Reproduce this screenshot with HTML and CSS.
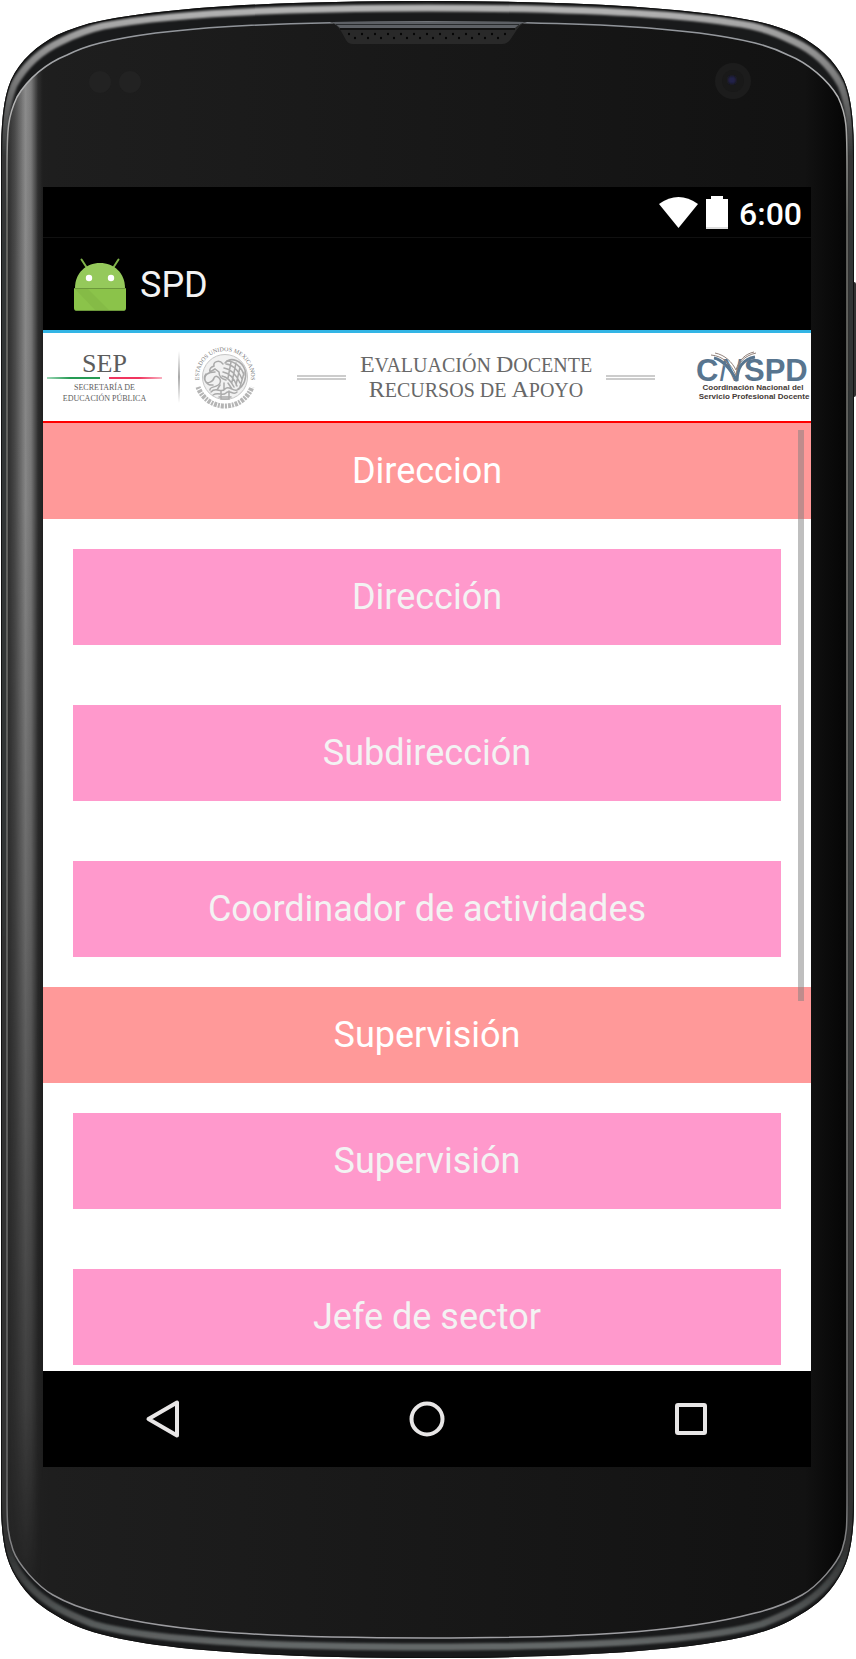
FILE: index.html
```html
<!DOCTYPE html>
<html lang="es">
<head>
<meta charset="utf-8">
<meta name="viewport" content="width=device-width, initial-scale=1">
<title>SPD</title>
<link rel="stylesheet" href="styles.css">
</head>
<body>
<div class="device">
  <svg class="frame" viewBox="0 0 856 1659" preserveAspectRatio="none" aria-hidden="true">
    <defs>
      <linearGradient id="face" x1="0" x2="1" y1="0" y2="0">
        <stop offset="0" stop-color="#242424"/><stop offset=".06" stop-color="#1e1e1e"/>
        <stop offset=".5" stop-color="#181818"/><stop offset=".94" stop-color="#121212"/><stop offset="1" stop-color="#020202"/>
      </linearGradient>
      <linearGradient id="rim" x1="0" x2="0" y1="0" y2="1">
        <stop offset="0" stop-color="#b4b4b4"/><stop offset=".04" stop-color="#808080"/><stop offset=".09" stop-color="#343636"/>
        <stop offset=".94" stop-color="#303232"/><stop offset="1" stop-color="#646868"/>
      </linearGradient>
      <linearGradient id="edge" x1="0" x2="0" y1="0" y2="1">
        <stop offset="0" stop-color="#8e9298"/><stop offset=".05" stop-color="#b8b8b8"/><stop offset=".12" stop-color="#757570"/>
        <stop offset=".9" stop-color="#6c6c6c"/><stop offset="1" stop-color="#a0a0a4"/>
      </linearGradient>
      <linearGradient id="gloss" x1="8" x2="43" y1="0" y2="0" gradientUnits="userSpaceOnUse">
        <stop offset="0" stop-color="#999999" stop-opacity=".1"/><stop offset=".2" stop-color="#999999" stop-opacity=".35"/>
        <stop offset=".5" stop-color="#999999" stop-opacity=".9"/><stop offset=".66" stop-color="#999999" stop-opacity=".75"/>
        <stop offset=".86" stop-color="#999999" stop-opacity=".12"/><stop offset="1" stop-color="#999999" stop-opacity="0"/>
      </linearGradient>
      <linearGradient id="fade" x1="0" x2="0" y1="0" y2="1">
        <stop offset="0" stop-color="#ffffff"/><stop offset=".3" stop-color="#eeeeee"/><stop offset=".55" stop-color="#aaaaaa"/>
        <stop offset=".85" stop-color="#444444"/><stop offset=".96" stop-color="#000000"/>
      </linearGradient>
      <mask id="glossmask"><rect width="60" height="1659" fill="url(#fade)"/></mask>
      <pattern id="holes" width="13" height="10" patternUnits="userSpaceOnUse" x="346" y="31">
        <circle cx="3" cy="3" r="1.2" fill="#050505"/><circle cx="9" cy="7" r="1.2" fill="#050505"/>
      </pattern>
      <clipPath id="shell"><path d="M1 160C1 125 3 98 11 80C20 60 38 45 57 35C70 29 85 24 100 21C170 7 280 1 428 1C575 1 685 7 755 21C770 24 785 29 798 35C817 45 835 60 844 80C852 98 854 125 854 160V1500C854 1525 852 1543 848 1557C843 1575 829 1595 812 1607C798 1617 783 1625 768 1630C708 1651 570 1658 428 1658C285 1658 147 1651 87 1630C72 1625 57 1617 43 1607C26 1595 12 1575 7 1557C3 1543 1 1525 1 1500Z"/></clipPath>
      <clipPath id="glass"><path d="M7 170C7 128 8 116 17 97C28 78 47 63 67 55C77 50 88 46 100 43C165 27 270 22 428 22C585 22 690 27 755 43C767 46 778 50 788 55C808 63 828 80 838 97C847 116 847 128 847 170V1500C847 1526 847 1535 842 1550C837 1564 818 1586 802 1595C788 1603 772 1609 755 1613C680 1633 575 1638 428 1638C280 1638 175 1633 100 1613C83 1609 67 1603 53 1595C37 1586 18 1564 13 1550C8 1535 7 1526 7 1500Z"/></clipPath>
      <filter id="soft"><feGaussianBlur stdDeviation="1.3"/></filter>
    </defs>
    <rect x="851" y="282" width="5" height="115" rx="2" fill="#333"/>
    <g clip-path="url(#shell)">
      <rect width="856" height="1659" fill="#191a1b"/>
      <path filter="url(#soft)" fill="none" stroke="url(#rim)" stroke-width="7" d="M4 165C4 125 6 105 14 85C25 65 40 51 62 41C76 34 90 29 103 26C172 13 280 8 428 8C575 8 683 13 752 26C765 29 779 34 793 41C815 51 830 65 841 85C849 105 851 125 851 165V1500C851 1525 850 1538 845 1554C840 1572 824 1590 808 1601C795 1611 777 1618 762 1624C700 1642 570 1647 428 1647C285 1647 155 1642 93 1624C78 1618 60 1611 47 1601C31 1590 15 1572 10 1554C5 1538 4 1525 4 1500Z"/>
      <path fill="none" stroke="#111" stroke-width="2" d="M1 160C1 125 3 98 11 80C20 60 38 45 57 35C70 29 85 24 100 21C170 7 280 1 428 1C575 1 685 7 755 21C770 24 785 29 798 35C817 45 835 60 844 80C852 98 854 125 854 160V1500C854 1525 852 1543 848 1557C843 1575 829 1595 812 1607C798 1617 783 1625 768 1630C708 1651 570 1658 428 1658C285 1658 147 1651 87 1630C72 1625 57 1617 43 1607C26 1595 12 1575 7 1557C3 1543 1 1525 1 1500Z"/>
    </g>
    <g clip-path="url(#glass)">
      <rect width="856" height="1659" fill="url(#face)"/>
      <rect width="60" height="1659" fill="url(#gloss)" mask="url(#glossmask)"/>
    </g>
    <path fill="none" stroke="url(#edge)" stroke-width="1.5" d="M7 170C7 128 8 116 17 97C28 78 47 63 67 55C77 50 88 46 100 43C165 27 270 22 428 22C585 22 690 27 755 43C767 46 778 50 788 55C808 63 828 80 838 97C847 116 847 128 847 170V1500C847 1526 847 1535 842 1550C837 1564 818 1586 802 1595C788 1603 772 1609 755 1613C680 1633 575 1638 428 1638C280 1638 175 1633 100 1613C83 1609 67 1603 53 1595C37 1586 18 1564 13 1550C8 1535 7 1526 7 1500Z"/>
    <path fill="#292929" d="M330 22Q335 23 341 31L346 40Q348 44 353 44H502Q507 44 510 40L516 31Q521 23 527 22Z"/>
    <path fill="#5d6065" d="M330 22Q335 23 340 28H515Q520 23 527 22Z"/>
    <path stroke="#0b0b0b" stroke-width="1.5" d="M340 29H515"/>
    <path stroke="#272a2c" d="M336 24.500H519"/>
    <path fill="url(#holes)" d="M346 31H511L506 41H350Z"/>
    <g fill="#222"><circle cx="100" cy="82" r="11"/><circle cx="130" cy="82" r="11"/></g>
    <circle cx="733" cy="81" r="18" fill="#1c1c1c"/><circle cx="733" cy="81" r="11" fill="#191919"/>
    <circle cx="732" cy="80" r="4" fill="#22204a" filter="url(#soft)"/>
  </svg>

  <main class="screen">
    <div class="status">
      <svg class="wifi" viewBox="0 0 39 31" aria-hidden="true"><path fill="#fff" d="M0 7Q19.500-7 39 7L19.500 31Z"/></svg>
      <svg class="battery" viewBox="0 0 22 33" aria-hidden="true"><path fill="#fff" d="M0 3H5V0H17V3H22V33H0Z"/><path fill="#ddd" d="M0 31H22V33H0Z"/></svg>
      <time class="clock">6:00</time>
    </div>
    <header class="appbar">
      <svg class="robot" viewBox="0 0 52 53" aria-hidden="true">
        <path stroke="#7fb348" stroke-width="2" stroke-linecap="round" d="M7.500 1.500L13 10M44.500 1.500L39 10"/>
        <path fill="#95c95b" d="M1 30C1 15 12 5 26 5S51 15 51 30Z"/>
        <path fill="#8bc34a" d="M0 30H52V50Q52 53 49 53H3Q0 53 0 50Z"/>
        <path fill="#7cae42" opacity=".4" d="M1 31L22 53H36L14 31Z"/>
        <path stroke="#6c983b" d="M0 30.500H52M2 52.500H50"/>
        <circle cx="15" cy="20" r="3.200" fill="#fff"/><circle cx="37" cy="20" r="3.200" fill="#fff"/>
      </svg>
      <h1 class="title">SPD</h1>
    </header>

    <section class="banner">
      <div class="brand">
        <div class="sep">
          <span class="sep-name">SEP</span>
          <span class="sep-rule"></span>
          <span class="sep-text">SECRETARÍA DE<br>EDUCACIÓN PÚBLICA</span>
        </div>
        <span class="divider"></span>
        <svg class="seal" viewBox="0 0 64 64" role="img" aria-label="Estados Unidos Mexicanos">
          <path id="arc" fill="none" d="M8 42A26 26 0 1 1 56 42"/>
          <text class="seal-text"><textPath href="#arc" startOffset="50%" text-anchor="middle">ESTADOS UNIDOS MEXICANOS</textPath></text>
          <path fill="none" stroke="#b5b5b5" stroke-width="5" stroke-dasharray="2 1 3 1" d="M5 42C9 53 19 61 32 61S55 53 59 42"/>
          <circle cx="32" cy="32" r="22.500" fill="#f1f1f1" stroke="#c6c6c6"/>
          <g fill="none" stroke="#aaa" stroke-width="1.500" stroke-linecap="round">
            <path d="M32 18C38 11 49 16 52 25C54 33 51 41 45 44M30 19C26 14 20 17 21 21C18 22 16 24 17 27L22 24L26 27C26 31 29 34 33 35"/>
            <path d="M33 19C38 19 45 24 49 34M31 23C37 24 43 29 47 38M30 27C36 28 41 33 44 41M34 16C41 16 48 21 51 30M29 31C34 32 38 36 41 42M38 17L35 33M43 18L39 37M47 22L43 40M51 28L47 42"/>
            <path d="M22 27C15 27 11 30 12 35S20 37 21 33S29 33 27 38S16 41 17 45M13 29C9 34 14 41 20 40"/>
            <path d="M27 40L24 45M31 38L31 45M35 38L39 44M18 47C23 41 28 49 32 44S41 49 46 44M20 50C26 46 29 52 33 48S40 51 44 47M26 52H38M28 46V54H36V46"/>
          </g>
        </svg>
      </div>
      <div class="headline">
        <span class="rails"></span>
        <h2 class="headline-text"><span class="cap">E</span>VALUACIÓN <span class="cap">D</span>OCENTE<br><span class="cap">R</span>ECURSOS DE <span class="cap">A</span>POYO</h2>
        <span class="rails"></span>
      </div>
      <svg class="cnspd" viewBox="0 0 116 60" role="img" aria-label="CNSPD">
        <g class="cnspd-name">
          <text x="1" y="34">C</text><text class="cnspd-n" x="24" y="34">N</text><text x="49" y="34">SPD</text>
        </g>
        <path fill="none" stroke="#fff" stroke-width="1.500" d="M20 12C30 16 37 25 41 33"/>
        <path fill="none" stroke="#58758f" stroke-width="3" d="M19 11C29 13 36 23 42 34C42 20 49 12 60 10"/>
        <path fill="none" stroke="#92827b" stroke-width="1" d="M16 8C28 9 36 17 41 28C43 15 49 9 61 6M20 6C30 8 37 15 41 23C44 13 50 7 59 5"/>
        <text class="cnspd-text" x="58" y="43" text-anchor="middle">Coordinación Nacional del</text>
        <text class="cnspd-text" x="59" y="52" text-anchor="middle">Servicio Profesional Docente</text>
      </svg>
    </section>

    <div class="list">
      <h2 class="group">Direccion</h2>
      <div class="options">
        <button class="option" type="button">Dirección</button>
        <button class="option" type="button">Subdirección</button>
        <button class="option" type="button">Coordinador de actividades</button>
      </div>
      <h2 class="group">Supervisión</h2>
      <div class="options options-last">
        <button class="option" type="button">Supervisión</button>
        <button class="option" type="button">Jefe de sector</button>
      </div>
      <span class="thumb"></span>
    </div>

    <nav class="navbar">
      <button class="key" type="button" aria-label="Atrás"><svg viewBox="0 0 40 40"><path d="M5.500 20L34 3.500V36.500Z"/></svg></button>
      <button class="key" type="button" aria-label="Inicio"><svg viewBox="0 0 40 40"><circle cx="20" cy="20" r="15.500"/></svg></button>
      <button class="key" type="button" aria-label="Recientes"><svg viewBox="0 0 40 40"><rect x="6" y="6" width="28" height="28" rx="1"/></svg></button>
    </nav>
  </main>
</div>
</body>
</html>
```
FILE: styles.css
```css
* { box-sizing: border-box; }
body { margin: 0; background: #fff; font-family: Roboto, sans-serif; }
h1, h2 { margin: 0; font-weight: 400; }
button { border: 0; padding: 0; font: inherit; cursor: pointer; }
svg { display: block; flex: none; }

.device { position: relative; padding: 187px 45px 192px 43px; }
.frame { position: absolute; inset: 0; width: 100%; height: 100%; }
.screen { position: relative; background: #fff; overflow: hidden; }

.status {
  display: flex; align-items: center; justify-content: flex-end;
  height: 50px; padding-right: 9px; background: #000; color: #fff;
}
.wifi { width: 39px; height: 31px; margin-right: 8px; }
.battery { width: 22px; height: 33px; margin-right: 11px; }
.clock { font-size: 32px; line-height: 40px; font-weight: 500; padding-top: 4px; }

.appbar {
  display: flex; align-items: center; gap: 14px;
  height: 96px; padding-left: 31px;
  background: #000; border-top: 1px solid #101010; border-bottom: 3px solid #33b5e5;
}
.robot { width: 52px; height: 53px; }
.title { color: #f3f3f3; font-size: 36px; line-height: 42px; padding-top: 2px; }

.banner {
  display: flex; align-items: center; justify-content: space-between;
  height: 90px; padding-left: 4px; border-bottom: 2px solid #f00; background: #fff;
}
.brand { display: flex; align-items: center; flex: none; }
.sep {
  display: flex; flex-direction: column; align-items: center; width: 115px;
  color: #5c5c5c; font-family: "Liberation Serif", serif; text-align: center;
}
.sep-name { font-size: 26px; line-height: 26px; }
.sep-rule {
  width: 100%; height: 2px; margin-bottom: 3px;
  background: linear-gradient(90deg, #9fd8b8, #259b54 20%, #259b54 46%, #fff 46%, #fff 54%, #f0355f 54%, #f0355f 80%, #f9b0c0);
}
.sep-text { font-size: 8px; line-height: 11px; white-space: nowrap; }
.divider {
  width: 2px; height: 52px; margin: 0 13px 0 16px;
  background: linear-gradient(#fff, #aaa 50%, #fff);
}
.seal { width: 64px; height: 64px; }
.seal-text { font: 400 6px "Liberation Serif", serif; fill: #777; }
.headline { display: flex; align-items: center; gap: 14px; flex: none; }
.headline-text {
  color: #686868; font-family: "Liberation Serif", serif;
  font-size: 20px; line-height: 24px; text-align: center; white-space: nowrap;
}
.cap { font-size: 24px; line-height: 24px; }
.rails { width: 49px; height: 5px; border-top: 2px solid #ccc; border-bottom: 2px solid #ccc; }
.cnspd { width: 116px; height: 60px; }
.cnspd-name { font: 700 31px "Liberation Sans", sans-serif; fill: #58758f; }
.cnspd-n { font-style: italic; font-weight: 400; }
.cnspd-text { font: 700 8px "Liberation Sans", sans-serif; fill: #443a36; }

.list { position: relative; padding-bottom: 6px; }
.group {
  padding: 27px 0; background: #f99; color: #fff;
  font-size: 36px; line-height: 42px; text-align: center;
}
.options { display: grid; gap: 60px; padding: 30px; }
.options-last { padding-bottom: 0; }
.option { padding: 27px 0; background: #f9c; color: #f3f3f3; font-size: 36px; line-height: 42px; }
.thumb {
  position: absolute; top: 7px; right: 7px; width: 6px; height: 571px;
  background: rgba(128, 128, 128, .5);
}

.navbar {
  display: flex; align-items: center; justify-content: space-between;
  height: 96px; padding: 0 13%; background: #000;
}
.key { background: none; }
.key svg { width: 40px; height: 40px; fill: none; stroke: #e8e6e6; stroke-width: 4; stroke-linejoin: round; }
```
